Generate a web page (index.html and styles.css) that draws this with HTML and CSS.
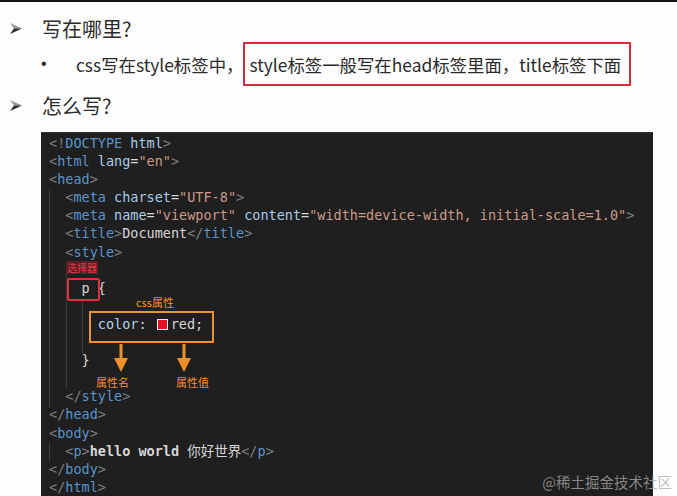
FILE: index.html
```html
<!DOCTYPE html>
<html lang="zh-CN">
<head>
    <meta charset="UTF-8">
    <meta name="viewport" content="width=device-width, initial-scale=1.0">
    <title>CSS 写在哪里</title>
    <link rel="stylesheet" href="styles.css">
</head>
<body>
    <div class="slide">
        <div class="heading">
            <svg class="arrow_mark" width="12" height="11" viewBox="0 0 12 11">
                <polygon points="0,0 12,5.5 4,5.5" fill="#9a9a9a"/>
                <polygon points="0,11 12,5.5 4,5.5" fill="#2a2a2a"/>
            </svg>
            <span>写在哪里?</span>
        </div>
        <div class="bullet_row">
            <span class="dot">•</span>
            <span class="bullet_text">css写在style标签中，</span>
            <span class="red_note">style标签一般写在head标签里面，title标签下面</span>
        </div>
        <div class="heading heading_second">
            <svg class="arrow_mark" width="12" height="11" viewBox="0 0 12 11">
                <polygon points="0,0 12,5.5 4,5.5" fill="#9a9a9a"/>
                <polygon points="0,11 12,5.5 4,5.5" fill="#2a2a2a"/>
            </svg>
            <span>怎么写?</span>
        </div>

        <div class="code_box">
<pre class="code"><span class="pn">&lt;!</span><span class="tg">DOCTYPE</span> <span class="at">html</span><span class="pn">&gt;</span>
<span class="pn">&lt;</span><span class="tg">html</span> <span class="at">lang</span><span class="tx">=</span><span class="st">"en"</span><span class="pn">&gt;</span>
<span class="pn">&lt;</span><span class="tg">head</span><span class="pn">&gt;</span>
  <span class="pn">&lt;</span><span class="tg">meta</span> <span class="at">charset</span><span class="tx">=</span><span class="st">"UTF-8"</span><span class="pn">&gt;</span>
  <span class="pn">&lt;</span><span class="tg">meta</span> <span class="at">name</span><span class="tx">=</span><span class="st">"viewport"</span> <span class="at">content</span><span class="tx">=</span><span class="st">"width=device-width, initial-scale=1.0"</span><span class="pn">&gt;</span>
  <span class="pn">&lt;</span><span class="tg">title</span><span class="pn">&gt;</span><span class="tx">Document</span><span class="pn">&lt;/</span><span class="tg">title</span><span class="pn">&gt;</span>
  <span class="pn">&lt;</span><span class="tg">style</span><span class="pn">&gt;</span>

    <span class="sel">p</span> <span class="tx">{</span>

      <span class="prop">color</span><span class="tx">:</span> <span class="swatch"></span><span class="tx">red;</span>

    <span class="tx">}</span>

  <span class="pn">&lt;/</span><span class="tg">style</span><span class="pn">&gt;</span>
<span class="pn">&lt;/</span><span class="tg">head</span><span class="pn">&gt;</span>
<span class="pn">&lt;</span><span class="tg">body</span><span class="pn">&gt;</span>
  <span class="pn">&lt;</span><span class="tg">p</span><span class="pn">&gt;</span><span class="tx bold">hello world </span><span class="tx">你好世界</span><span class="pn">&lt;/</span><span class="tg">p</span><span class="pn">&gt;</span>
<span class="pn">&lt;/</span><span class="tg">body</span><span class="pn">&gt;</span>
<span class="pn">&lt;/</span><span class="tg">html</span><span class="pn">&gt;</span></pre>

            <!-- indent guides -->
            <div class="guide guide_head"></div>
            <div class="guide guide_style"></div>
            <div class="guide guide_rule"></div>
            <div class="guide guide_body"></div>

            <!-- annotations -->
            <div class="tag_selector">选择器</div>
            <div class="box_selector"></div>
            <div class="label_css">css属性</div>
            <div class="box_decl"></div>
            <svg class="pointer pointer_name" width="14" height="28" viewBox="0 0 14 28">
                <rect x="5.5" y="0" width="3" height="16" fill="#f0902c"/>
                <polygon points="0,14 14,14 7,28" fill="#f0902c"/>
            </svg>
            <svg class="pointer pointer_value" width="14" height="28" viewBox="0 0 14 28">
                <rect x="5.5" y="0" width="3" height="16" fill="#f0902c"/>
                <polygon points="0,14 14,14 7,28" fill="#f0902c"/>
            </svg>
            <div class="label_name">属性名</div>
            <div class="label_value">属性值</div>
        </div>
    </div>
    <div class="watermark">@稀土掘金技术社区</div>
</body>
</html>
```

FILE: styles.css
```css
html, body {
    margin: 0;
    padding: 0;
    height: 100%;
    overflow: hidden;
}
body {
    background-color: #fdfdfd;
    font-family: "Noto Sans CJK SC", "Noto Sans", sans-serif;
    color: #2b2b2b;
    border-top: 2px solid #141414;
    box-sizing: border-box;
    position: relative;
}
.slide {
    padding-top: 12px;
}
.heading {
    display: flex;
    align-items: center;
    height: 28px;
    font-size: 20px;
}
.heading_second {
    margin-top: 5px;
}
.arrow_mark {
    margin-left: 10px;
    margin-right: 20px;
    width: 12px;
    height: 11px;
    flex: none;
}
.bullet_row {
    display: flex;
    align-items: center;
    height: 44px;
    font-size: 17.4px;
}
.dot {
    width: 35px;
    padding-left: 41px;
    box-sizing: content-box;
    font-family: "Liberation Sans", sans-serif;
    font-size: 16px;
}
.red_note {
    display: flex;
    align-items: center;
    height: 40px;
    border: 2px solid #d6303c;
    padding: 0 8px 0 4px;
}

.code_box {
    position: relative;
    margin: 13px 0 0 41px;
    width: 612px;
    height: 380px;
    background-color: #1f1f1f;
    border-top: 1px solid #333;
}
.code {
    margin: 0;
    padding: 1px 0 0 8px;
    font-family: "DejaVu Sans Mono", "Noto Sans CJK SC", monospace;
    font-size: 13.5px;
    line-height: 18.1px;
    color: #d4d4d4;
}
.pn { color: #808080; }
.tg { color: #5b93c9; }
.at { color: #a9cbe6; }
.st { color: #c99a8a; }
.tx { color: #d6d6d6; }
.sel { color: #d6d6d6; }
.prop { color: #b5d6ea; }
.bold { font-weight: bold; }
.swatch {
    display: inline-block;
    width: 9px;
    height: 9px;
    margin: 0 3px 0 2px;
    background-color: #e81123;
    border: 1px solid #f2f2f2;
    vertical-align: -1px;
}

.guide {
    position: absolute;
    width: 1px;
    background-color: #3c3c3c;
}
.guide_head { left: 8px; top: 57px; height: 218px; }
.guide_style { left: 25px; top: 129px; height: 126px; }
.guide_rule { left: 41px; top: 166px; height: 54px; }
.guide_body { left: 8px; top: 310px; height: 19px; }

.tag_selector {
    position: absolute;
    left: 25px;
    top: 128px;
    padding: 0 1px;
    font-size: 10px;
    line-height: 13px;
    color: #e23a48;
    background-color: #5a1e26;
}
.box_selector {
    position: absolute;
    left: 26px;
    top: 145px;
    width: 29px;
    height: 19px;
    border: 2px solid #e0303c;
    border-radius: 2px;
}
.label_css {
    position: absolute;
    left: 95px;
    top: 161px;
    font-size: 11px;
    color: #f0902c;
}
.box_decl {
    position: absolute;
    left: 48px;
    top: 178px;
    width: 121px;
    height: 28px;
    border: 2px solid #f0922e;
}
.pointer {
    position: absolute;
    top: 211px;
}
.pointer_name { left: 73px; }
.pointer_value { left: 136px; }
.label_name, .label_value {
    position: absolute;
    top: 241px;
    font-size: 11px;
    color: #f0902c;
}
.label_name { left: 55px; }
.label_value { left: 135px; }

.watermark {
    position: absolute;
    right: 5px;
    bottom: 4px;
    font-size: 14.5px;
    color: rgba(170, 170, 170, 0.75);
}
```
